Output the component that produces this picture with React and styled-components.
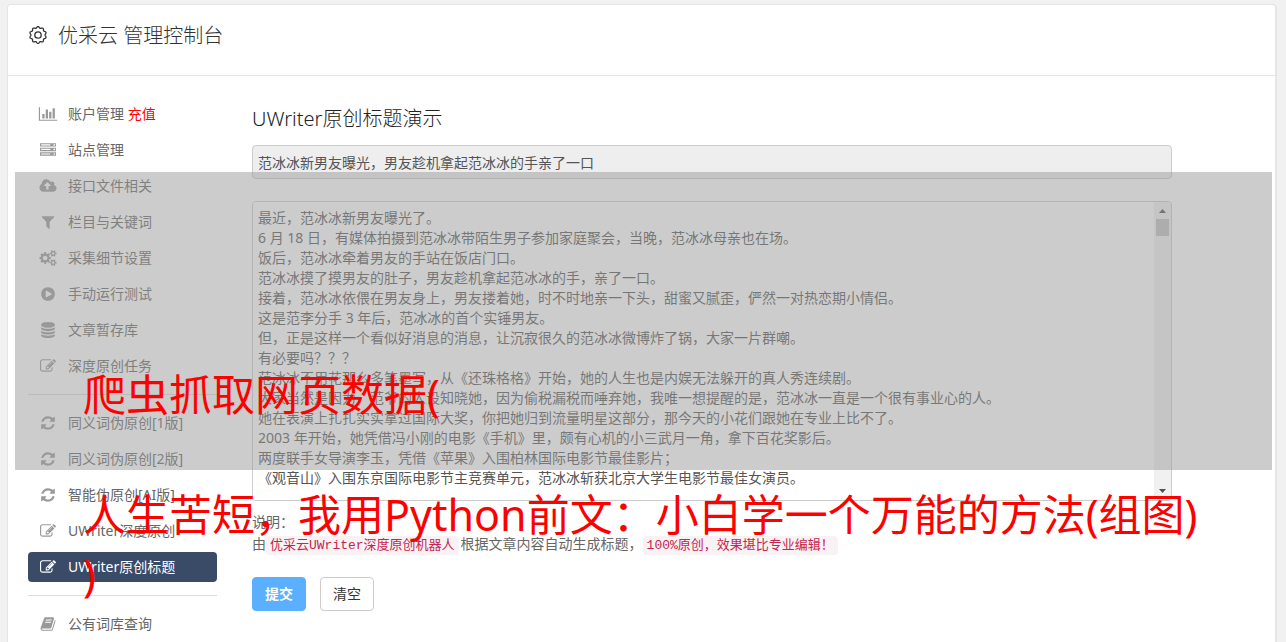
import React from "react";
import styled, { createGlobalStyle } from "styled-components";

const sans = `"Noto Sans", "Noto Sans CJK SC", sans-serif`;
const mono = `"Liberation Mono", "Noto Sans CJK SC", monospace`;

const GlobalStyle = createGlobalStyle`
  * { box-sizing: border-box; }
  html, body, #root { height: 100%; }
  body {
    margin: 0;
    overflow: hidden;
    background: #f1f1f1;
    color: #666;
    font-family: ${sans};
    font-size: 14px;
    line-height: 20px;
  }
`;

const Page = styled.div`
  position: relative;
  min-height: 100%;
  padding: 4px 9px 0 7px;
`;

const Card = styled.div`
  background: #fff;
  border: 1px solid #e6e6e6;
  border-right-width: 2px;
  border-radius: 4px;
  padding-bottom: 60px;
`;

const CardHeader = styled.header`
  display: flex;
  align-items: center;
  gap: 10px;
  height: 71px;
  padding: 0 20px 10px;
  border-bottom: 1px solid #e5e5e5;
`;

const Brand = styled.h1`
  margin: 0;
  padding-top: 2px;
  color: #333;
  font-size: 20px;
  font-weight: 300;
  line-height: 28px;
`;

const Columns = styled.div`
  display: flex;
  align-items: flex-start;
  gap: 35px;
  padding: 23px 103px 0 20px;
`;

const Sidebar = styled.nav`
  flex: none;
  width: 189px;
`;

const Menu = styled.ul`
  display: flex;
  flex-direction: column;
  gap: 6px;
  margin: 0;
  padding: 0;
  list-style: none;
`;

const MenuLink = styled.a`
  display: flex;
  align-items: center;
  gap: 10px;
  height: 30px;
  padding-left: 10px;
  border-radius: 4px;
  background: ${(p) => (p.$active ? "#3a4b68" : "transparent")};
  color: ${(p) => (p.$active ? "#fff" : "#666")};
  text-decoration: none;
  white-space: nowrap;
`;

const MenuIcon = styled.svg`
  flex: none;
  width: 20px;
  height: 16px;
  fill: ${(p) => (p.$active ? "#fff" : "#999")};
`;

const Recharge = styled.span`
  color: #f00;
`;

const Divider = styled.li`
  height: 1px;
  margin: 7px 0;
  background: #ddd;
`;

const Main = styled.main`
  flex: 1;
  min-width: 0;
`;

const Title = styled.h2`
  margin: 6px 0 12px;
  color: #222;
  font-size: 20px;
  font-weight: 300;
  line-height: 28px;
`;

const TitleInput = styled.input`
  display: block;
  width: 100%;
  height: 34px;
  padding: 0 5px;
  border: 1px solid #ccc;
  border-radius: 4px;
  background: #eee;
  color: #555;
  font: 14px/20px ${sans};
`;

const ArticleFrame = styled.div`
  display: flex;
  height: 300px;
  margin: 22px 0 10px;
  border: 1px solid #ccc;
  border-radius: 4px;
  overflow: hidden;
`;

const Article = styled.textarea`
  flex: 1;
  min-width: 0;
  padding: 6px 5px;
  border: 0;
  outline: 0;
  resize: none;
  overflow: hidden;
  background: #fff;
  color: #555;
  font: 14px/20px ${sans};
`;

const ScrollTrack = styled.div`
  display: flex;
  flex-direction: column;
  align-items: center;
  width: 17px;
  background: #f1f1f1;
`;

const ScrollArrow = styled.svg`
  width: 17px;
  height: 17px;
  fill: #505050;
`;

const ScrollThumb = styled.div`
  width: 13px;
  height: 17px;
  margin-bottom: auto;
  background: #c1c1c1;
`;

const Help = styled.p`
  margin: 0;
  line-height: 22px;
`;

const Code = styled.code`
  margin-right: 2px;
  padding: 2px 4px;
  border-radius: 4px;
  background: #f9f2f4;
  color: #c7254e;
  font-family: ${mono};
  font-size: 13px;
`;

const Actions = styled.div`
  display: flex;
  gap: 14px;
  margin-top: 20px;
`;

const Button = styled.button`
  width: 54px;
  height: 34px;
  padding: 0;
  border: 1px solid ${(p) => (p.$primary ? "#5aafff" : "#ccc")};
  border-radius: 4px;
  background: ${(p) => (p.$primary ? "#5aafff" : "#fff")};
  color: ${(p) => (p.$primary ? "#fff" : "#333")};
  font: ${(p) => (p.$primary ? 700 : 400)} 14px/20px ${sans};
`;

const Banner = styled.div`
  position: absolute;
  top: 172px;
  left: 15px;
  right: 14px;
  height: 298px;
  padding: 193px 68px 0;
  background: rgba(153, 153, 153, 0.5);
  color: #f00;
  font-size: 43px;
  line-height: 60px;
  white-space: pre-line;
  pointer-events: none;
`;

const icons = {
  chart: ["0 0 2048 1792", "M640 896v512h-256v-512h256zm384-512v1024h-256v-1024h256zm1024 1152v128h-2048v-1536h128v1408h1920zm-640-896v768h-256v-768h256zm384-384v1152h-256v-1152h256z"],
  server: ["0 0 1792 1792", "M128 1408h1024v-128h-1024v128zm0-512h1024v-128h-1024v128zm1568 448q0-40-28-68t-68-28-68 28-28 68 28 68 68 28 68-28 28-68zm-1568-960h1024v-128h-1024v128zm1568 448q0-40-28-68t-68-28-68 28-28 68 28 68 68 28 68-28 28-68zm0-512q0-40-28-68t-68-28-68 28-28 68 28 68 68 28 68-28 28-68zm96 832v384h-1792v-384h1792zm0-512v384h-1792v-384h1792zm0-512v384h-1792v-384h1792z"],
  upload: ["-64 0 1920 1792", "M1216 864q0-14-9-23l-352-352q-9-9-23-9t-23 9l-351 351q-10 12-10 24 0 14 9 23t23 9h224v352q0 13 9.500 22.500t22.500 9.500h192q13 0 22.500-9.500t9.500-22.500v-352h224q13 0 22.500-9.500t9.500-22.500zm640 288q0 159-112.500 271.500t-271.500 112.500h-1088q-185 0-316.500-131.500t-131.500-316.500q0-130 70-240t188-165q-2-30-2-43 0-212 150-362t362-150q156 0 285.500 87t188.500 231q71-62 166-62 106 0 181 75t75 181q0 76-41 138 130 31 213.500 135.500t83.500 238.500z"],
  filter: ["0 0 1792 1792", "M1595 295q17 41-14 70l-493 493v742q0 42-39 59-13 5-25 5-27 0-45-19l-256-256q-19-19-19-45v-486l-493-493q-31-29-14-70 17-39 59-39h1280q42 0 59 39z"],
  cogs: ["0 0 1920 1792", "M896 896q0-106-75-181t-181-75-181 75-75 181 75 181 181 75 181-75 75-181zm768 512q0-52-38-90t-90-38-90 38-38 90q0 53 37.500 90.500t90.500 37.500 90.500-37.500 37.500-90.500zm0-1024q0-52-38-90t-90-38-90 38-38 90q0 53 37.500 90.500t90.500 37.500 90.500-37.500 37.500-90.500zm-384 421v185q0 10-7 19.500t-16 10.500l-155 24q-11 35-32 76 34 48 90 115 7 11 7 20 0 12-7 19-23 30-82.500 89.500t-78.500 59.500q-11 0-21-7l-115-90q-37 19-77 31-11 108-23 155-7 24-30 24h-186q-11 0-20-7.500t-10-17.500l-23-153q-34-10-75-31l-118 89q-7 7-20 7-11 0-21-8-144-133-144-160 0-9 7-19 10-14 41-53t47-61q-23-44-35-82l-152-24q-10-1-17-9.500t-7-19.500v-185q0-10 7-19.500t16-10.500l155-24q11-35 32-76-34-48-90-115-7-11-7-20 0-12 7-20 22-30 82-89t79-59q11 0 21 7l115 90q34-18 77-32 11-108 23-154 7-24 30-24h186q11 0 20 7.500t10 17.500l23 153q34 10 75 31l118-89q8-7 20-7 11 0 21 8 144 133 144 160 0 8-7 19-12 16-42 54t-45 60q23 48 34 82l152 23q10 2 17 10.500t7 19.500zm640 533v140q0 16-149 31-12 27-30 52 51 113 51 138 0 4-4 7-122 71-124 71-8 0-46-47t-52-68q-20 2-30 2t-30-2q-14 21-52 68t-46 47q-2 0-124-71-4-3-4-7 0-25 51-138-18-25-30-52-149-15-149-31v-140q0-16 149-31 13-29 30-52-51-113-51-138 0-4 4-7 4-2 35-20t59-34 30-16q8 0 46 46.500t52 67.500q20-2 30-2t30 2q51-71 92-112l6-2q4 0 124 70 4 3 4 7 0 25-51 138 17 23 30 52 149 15 149 31zm0-1024v140q0 16-149 31-12 27-30 52 51 113 51 138 0 4-4 7-122 71-124 71-8 0-46-47t-52-68q-20 2-30 2t-30-2q-14 21-52 68t-46 47q-2 0-124-71-4-3-4-7 0-25 51-138-18-25-30-52-149-15-149-31v-140q0-16 149-31 13-29 30-52-51-113-51-138 0-4 4-7 4-2 35-20t59-34 30-16q8 0 46 46.500t52 67.500q20-2 30-2t30 2q51-71 92-112l6-2q4 0 124 70 4 3 4 7 0 25-51 138 17 23 30 52 149 15 149 31z"],
  play: ["0 0 1792 1792", "M896 128q209 0 385.500 103t279.500 279.500 103 385.500-103 385.500-279.500 279.500-385.500 103-385.500-103-279.500-279.500-103-385.500 103-385.500 279.500-279.500 385.500-103zm384 823q32-18 32-55t-32-55l-544-320q-31-19-64-1-32 19-32 56v640q0 37 32 56 16 8 32 8 17 0 32-9z"],
  database: ["0 0 1792 1792", "M896 768q237 0 443-43t325-127v170q0 69-103 128t-280 93.500-385 34.500-385-34.500-280-93.500-103-128v-170q119 84 325 127t443 43zm0 768q237 0 443-43t325-127v170q0 69-103 128t-280 93.500-385 34.500-385-34.500-280-93.500-103-128v-170q119 84 325 127t443 43zm0-384q237 0 443-43t325-127v170q0 69-103 128t-280 93.500-385 34.500-385-34.500-280-93.500-103-128v-170q119 84 325 127t443 43zm0-1152q208 0 385 34.500t280 93.500 103 128v128q0 69-103 128t-280 93.500-385 34.500-385-34.500-280-93.500-103-128v-128q0-69 103-128t280-93.500 385-34.500z"],
  edit: ["0 0 1792 1792", "M888 1184l116-116-152-152-116 116v56h96v96h56zm440-720q-16-16-33 1l-350 350q-17 17-1 33t33-1l350-350q17-17 1-33zm80 594v190q0 119-84.500 203.500t-203.500 84.500h-832q-119 0-203.500-84.500t-84.500-203.500v-832q0-119 84.500-203.500t203.500-84.500h832q63 0 117 25 15 7 18 23 3 17-9 29l-49 49q-14 14-32 8-23-6-45-6h-832q-66 0-113 47t-47 113v832q0 66 47 113t113 47h832q66 0 113-47t47-113v-126q0-13 9-22l64-64q15-15 35-7t20 29zm-96-738l288 288-672 672h-288v-288zm444 132l-92 92-288-288 92-92q28-28 68-28t68 28l152 152q28 28 28 68t-28 68z"],
  refresh: ["0 0 1792 1792", "M1639 1056q0 5-1 7-64 268-268 434.500t-478 166.500q-146 0-282.500-55t-243.500-157l-129 129q-19 19-45 19t-45-19-19-45v-448q0-26 19-45t45-19h448q26 0 45 19t19 45-19 45l-137 137q71 66 161 102t187 36q134 0 250-65t186-179q11-17 53-117 8-23 30-23h192q13 0 22.500 9.500t9.500 22.500zm25-800v448q0 26-19 45t-45 19h-448q-26 0-45-19t-19-45 19-45l138-138q-148-137-349-137-134 0-250 65t-186 179q-11 17-53 117-8 23-30 23h-199q-13 0-22.500-9.500t-9.500-22.500v-7q65-268 270-434.500t480-166.500q146 0 284 55.500t245 156.500l130-129q19-19 45-19t45 19 19 45z"],
  book: ["0 0 1792 1792", "M1703 478q40 57 18 129l-275 906q-19 64-76.500 107.500t-122.500 43.500h-923q-77 0-148.500-53.500t-99.500-131.500q-24-67-2-127 0-4 3-27t4-37q1-8-3-21.500t-3-19.500q2-11 8-21t16.500-23.500 16.500-23.500q23-38 45-91.500t30-91.500q3-10 .5-30t-.5-28q3-11 17-28t17-23q21-36 42-92t25-90q1-9-2.500-32t.5-28q4-13 22-30.500t22-22.500q19-26 42.500-84.500t27.500-96.500q1-8-3-25.500t-2-26.500q2-8 9-18t18-23 17-21q8-12 16.500-30.500t15-35 16-36 19.500-32 26.500-23.500 36-11.500 47.500 5.500l-1 3q38-9 51-9h761q74 0 114 56t18 130l-274 906q-36 119-71.500 153.500t-128.500 34.500h-869q-27 0-38 15-11 16-1 43 24 70 144 70h923q29 0 56-15.500t35-41.500l300-987q7-22 5-57 38 15 59 43zm-1064 2q-4 13 2 22.500t20 9.500h608q13 0 25.500-9.500t16.500-22.500l21-64q4-13-2-22.500t-20-9.500h-608q-13 0-25.500 9.500t-16.500 22.500zm-83 256q-4 13 2 22.500t20 9.500h608q13 0 25.500-9.500t16.500-22.500l21-64q4-13-2-22.500t-20-9.500h-608q-13 0-25.500 9.500t-16.500 22.500z"],
};

const menu = [
  { icon: "chart", label: "账户管理", extra: "充值" },
  { icon: "server", label: "站点管理" },
  { icon: "upload", label: "接口文件相关" },
  { icon: "filter", label: "栏目与关键词" },
  { icon: "cogs", label: "采集细节设置" },
  { icon: "play", label: "手动运行测试" },
  { icon: "database", label: "文章暂存库" },
  { icon: "edit", label: "深度原创任务" },
  null,
  { icon: "refresh", label: "同义词伪原创[1版]" },
  { icon: "refresh", label: "同义词伪原创[2版]" },
  { icon: "refresh", label: "智能伪原创[AI版]" },
  { icon: "edit", label: "UWriter深度原创" },
  { icon: "edit", label: "UWriter原创标题", active: true },
  null,
  { icon: "book", label: "公有词库查询" },
];

const article = `最近，范冰冰新男友曝光了。
6 月 18 日，有媒体拍摄到范冰冰带陌生男子参加家庭聚会，当晚，范冰冰母亲也在场。
饭后，范冰冰牵着男友的手站在饭店门口。
范冰冰摸了摸男友的肚子，男友趁机拿起范冰冰的手，亲了一口。
接着，范冰冰依偎在男友身上，男友搂着她，时不时地亲一下头，甜蜜又腻歪，俨然一对热恋期小情侣。
这是范李分手 3 年后，范冰冰的首个实锤男友。
但，正是这样一个看似好消息的消息，让沉寂很久的范冰冰微博炸了锅，大家一片群嘲。
有必要吗？？？
范冰冰不用花那么多笔墨写，从《还珠格格》开始，她的人生也是内娱无法躲开的真人秀连续剧。
大家当然是因为，范爷的人设知晓她，因为偷税漏税而唾弃她，我唯一想提醒的是，范冰冰一直是一个很有事业心的人。
她在表演上扎扎实实拿过国际大奖，你把她归到流量明星这部分，那今天的小花们跟她在专业上比不了。
2003 年开始，她凭借冯小刚的电影《手机》里，颇有心机的小三武月一角，拿下百花奖影后。
两度联手女导演李玉，凭借《苹果》入围柏林国际电影节最佳影片；
《观音山》入围东京国际电影节主竞赛单元，范冰冰斩获北京大学生电影节最佳女演员。`;

// Scalloped outline of the header gear: ten rounded teeth on a circle.
const gearPath =
  Array.from({ length: 120 }, (_, i) => {
    const angle = (i / 120) * Math.PI * 2;
    const radius = 7.7 + 0.7 * Math.cos(angle * 10);
    const x = 10 + radius * Math.sin(angle);
    const y = 10 - radius * Math.cos(angle);
    return `${i ? "L" : "M"}${x.toFixed(2)} ${y.toFixed(2)}`;
  }).join("") + "Z";

function GearIcon() {
  return (
    <svg width="20" height="20" viewBox="0 0 20 20" fill="none" stroke="#333" strokeWidth="1.3" aria-hidden="true">
      <path d={gearPath} />
      <circle cx="10" cy="10" r="3.2" />
    </svg>
  );
}

function MenuItem({ item }) {
  const [viewBox, path] = icons[item.icon];
  return (
    <li>
      <MenuLink href="#" $active={item.active} aria-current={item.active ? "page" : undefined}>
        <MenuIcon viewBox={viewBox} $active={item.active} aria-hidden="true">
          <path d={path} />
        </MenuIcon>
        <span>
          {item.label}
          {item.extra && <Recharge> {item.extra}</Recharge>}
        </span>
      </MenuLink>
    </li>
  );
}

export default function App() {
  return (
    <>
      <GlobalStyle />
      <Page>
        <Card>
          <CardHeader>
            <GearIcon />
            <Brand>优采云 管理控制台</Brand>
          </CardHeader>
          <Columns>
            <Sidebar>
              <Menu>
                {menu.map((item, i) =>
                  item ? <MenuItem key={i} item={item} /> : <Divider key={i} role="separator" />
                )}
              </Menu>
            </Sidebar>
            <Main>
              <Title>UWriter原创标题演示</Title>
              <TitleInput
                aria-label="标题"
                readOnly
                defaultValue="范冰冰新男友曝光，男友趁机拿起范冰冰的手亲了一口"
              />
              <ArticleFrame>
                <Article aria-label="文章内容" defaultValue={article} spellCheck={false} />
                <ScrollTrack aria-hidden="true">
                  <ScrollArrow viewBox="0 0 17 17">
                    <path d="M5 11L8.500 7L12 11Z" />
                  </ScrollArrow>
                  <ScrollThumb />
                  <ScrollArrow viewBox="0 0 17 17">
                    <path d="M5 6L8.500 10L12 6Z" />
                  </ScrollArrow>
                </ScrollTrack>
              </ArticleFrame>
              <Help>说明：</Help>
              <Help>
                由<Code>优采云UWriter深度原创机器人</Code>根据文章内容自动生成标题，
                <Code>100%原创，效果堪比专业编辑！</Code>
              </Help>
              <Actions>
                <Button type="button" $primary>提交</Button>
                <Button type="button">清空</Button>
              </Actions>
            </Main>
          </Columns>
        </Card>
        <Banner>{"爬虫抓取网页数据(\n\n人生苦短，我用Python前文：小白学一个万能的方法(组图)\n)"}</Banner>
      </Page>
    </>
  );
}
